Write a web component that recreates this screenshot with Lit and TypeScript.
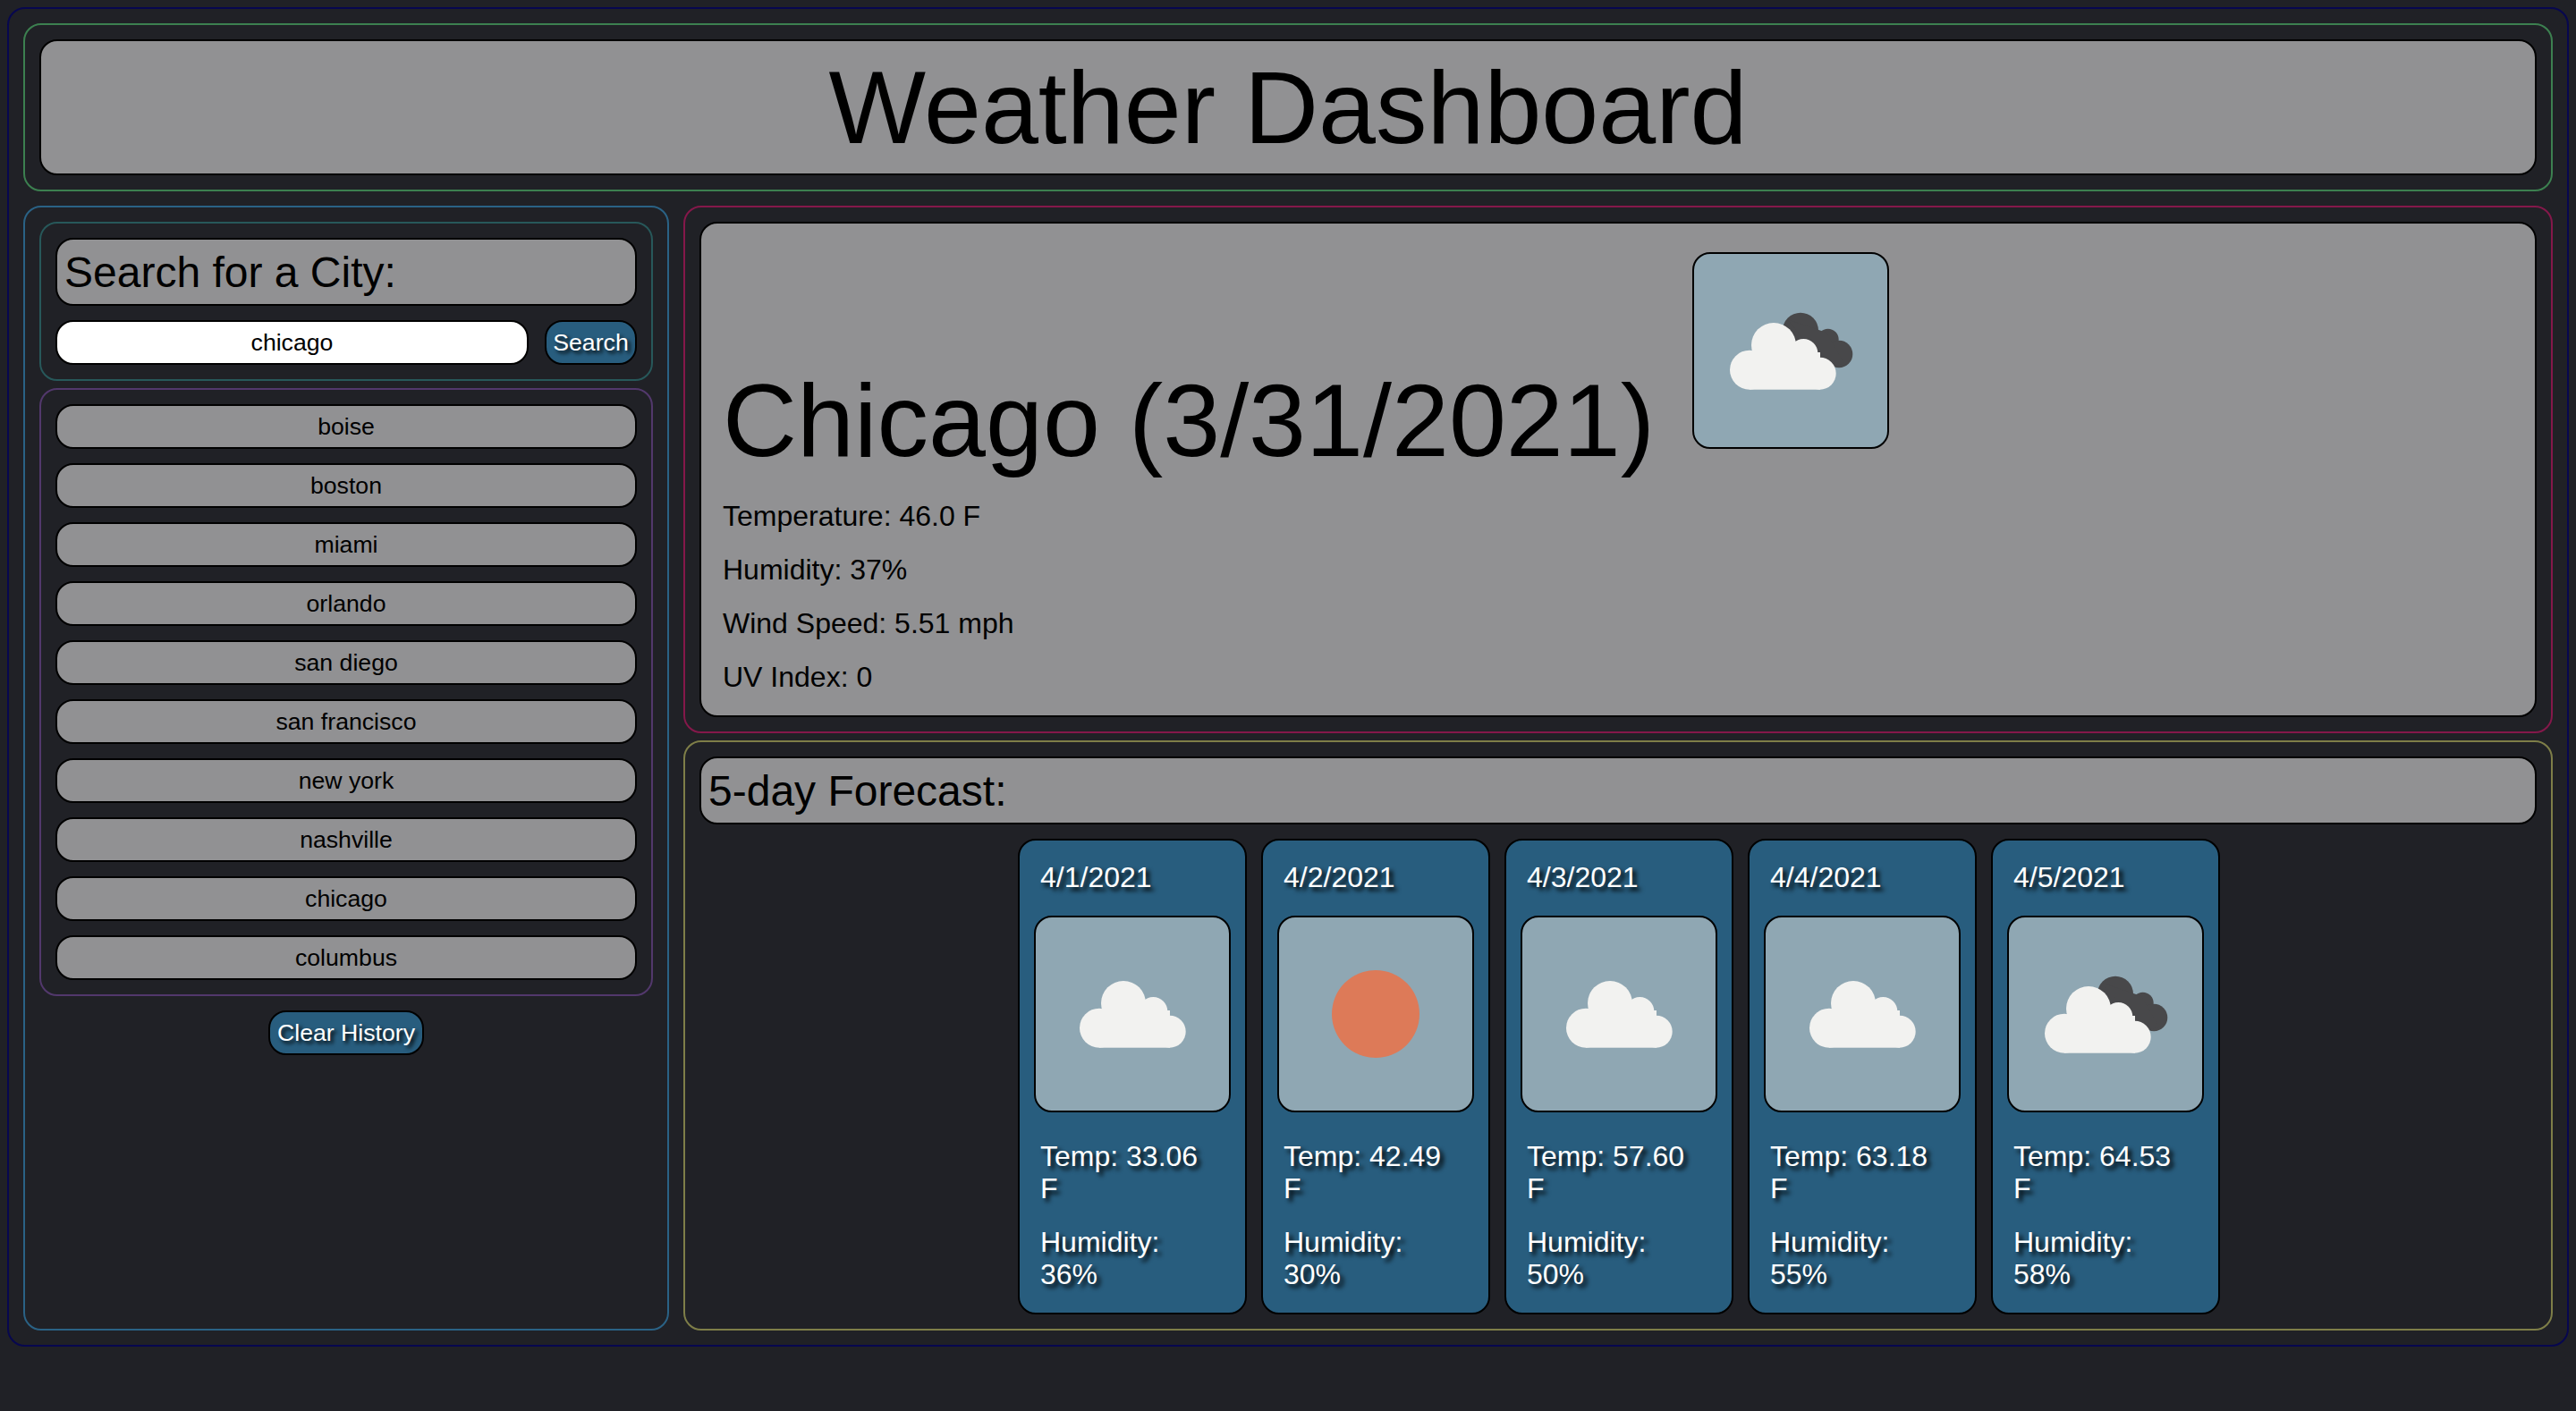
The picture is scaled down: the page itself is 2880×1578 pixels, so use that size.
import { LitElement, html, svg, css } from "lit";
import { customElement, state } from "lit/decorators.js";

type Sky = "clear" | "clouds" | "broken";

const cloud = (fill: string) => svg`
  <g fill=${fill}>
    <circle cx="91" cy="104" r="25" />
    <circle cx="64" cy="131.7" r="22" />
    <circle cx="124.3" cy="113" r="16" />
    <circle cx="142.7" cy="135.7" r="18" />
    <rect x="64" y="112" width="79" height="41.7" />
  </g>
`;

const darkCloud = svg`
  <g fill="#48484a">
    <circle cx="121" cy="87.7" r="20" />
    <circle cx="151.7" cy="97.7" r="12" />
    <circle cx="164" cy="114" r="15.3" />
    <path d="M106 75 L150 90 L170 125 L150 129 Z" />
  </g>
`;

const skyIcon = (sky: Sky) => html`
  <div class="icon">
    <svg viewBox="2 2 216 216" width="216" height="216">
      ${sky === "clear"
        ? svg`<circle cx="110" cy="110" r="49" fill="#dd7a58" />`
        : sky === "clouds"
          ? svg`<g transform="translate(9 -6)">${cloud("#f2f2f0")}</g>`
          : svg`${darkCloud}${cloud("#f2f2f0")}`}
    </svg>
  </div>
`;

@customElement("app-root")
export class AppRoot extends LitElement {
  @state() private _query = "chicago";
  @state() private _history = [
    "boise",
    "boston",
    "miami",
    "orlando",
    "san diego",
    "san francisco",
    "new york",
    "nashville",
    "chicago",
    "columbus",
  ];
  @state() private _forecast: {
    date: string;
    temp: string;
    humidity: number;
    sky: Sky;
  }[] = [
    { date: "4/1/2021", temp: "33.06", humidity: 36, sky: "clouds" },
    { date: "4/2/2021", temp: "42.49", humidity: 30, sky: "clear" },
    { date: "4/3/2021", temp: "57.60", humidity: 50, sky: "clouds" },
    { date: "4/4/2021", temp: "63.18", humidity: 55, sky: "clouds" },
    { date: "4/5/2021", temp: "64.53", humidity: 58, sky: "broken" },
  ];

  static styles = css`
    :host {
      display: block;
      box-sizing: border-box;
      min-height: 100vh;
      padding: 8px;
      background: #202126;
      color: #000;
      font-family: "Liberation Sans", Arial, sans-serif;
      font-size: 32px;
    }
    * {
      box-sizing: border-box;
    }
    .frame {
      border: 2px solid;
      border-radius: 20px;
      padding: 16px;
    }
    .panel {
      background: #919193;
      border: 2px solid #000;
      border-radius: 20px;
    }
    .page {
      border-color: #07074f;
    }
    .header {
      border-color: #3c8050;
      margin-bottom: 16px;
    }
    .header .panel {
      height: 152px;
      display: flex;
      align-items: center;
      justify-content: center;
    }
    h1 {
      margin: 0;
      font-size: 115px;
      font-weight: 400;
    }
    .columns {
      display: flex;
      gap: 16px;
    }
    .sidebar {
      width: 722px;
      flex: none;
      border-color: #2a6285;
      display: flex;
      flex-direction: column;
      align-items: stretch;
    }
    .search {
      border-color: #27585a;
      margin-bottom: 8px;
    }
    .heading {
      height: 76px;
      padding: 0 8px;
      display: flex;
      align-items: center;
      font-size: 48px;
    }
    .search-row {
      display: flex;
      justify-content: space-between;
      margin-top: 16px;
    }
    input {
      width: 529px;
      height: 50px;
      border: 2px solid #000;
      border-radius: 20px;
      background: #fff;
      color: #000;
      text-align: center;
      font: 26.67px "Liberation Sans", Arial, sans-serif;
      outline: none;
    }
    button {
      font: 26.67px "Liberation Sans", Arial, sans-serif;
      padding: 0;
      cursor: pointer;
    }
    .action {
      height: 50px;
      border: 2px solid #000;
      border-radius: 20px;
      background: #285d7e;
      color: #fff;
      text-shadow: 3px 3px 4px #000;
    }
    .search-btn {
      width: 103px;
    }
    .history {
      border-color: #52386c;
      display: flex;
      flex-direction: column;
      gap: 16px;
    }
    .history button {
      height: 50px;
      color: #000;
    }
    .clear {
      width: 174px;
      margin: 16px auto 0;
    }
    .content {
      flex: 1;
      min-width: 0;
      display: flex;
      flex-direction: column;
      gap: 8px;
    }
    .current {
      border-color: #84184a;
    }
    .current .panel {
      height: 554px;
      padding: 32px 24px 0;
    }
    .title-row {
      display: flex;
      align-items: flex-end;
      gap: 42px;
    }
    .title-row h1 {
      line-height: 143px;
    }
    .title-row .icon {
      margin-bottom: 40px;
    }
    .stat {
      margin: 0 0 23px;
      line-height: 37px;
    }
    .title-row + .stat {
      margin-top: 17px;
    }
    .icon {
      width: 220px;
      height: 220px;
      flex: none;
      background: #8fa7b3;
      border: 2px solid #000;
      border-radius: 20px;
    }
    .icon svg {
      display: block;
    }
    .forecast {
      border-color: #7e7e48;
      flex: 1;
    }
    .forecast-cards {
      display: flex;
      justify-content: center;
      gap: 16px;
      margin-top: 16px;
      padding-left: 2px;
    }
    .card {
      width: 256px;
      height: 532px;
      padding: 0 16px;
      background: #285d7e;
      border: 2px solid #000;
      border-radius: 20px;
      color: #fff;
      text-shadow: 4px 4px 5px #000;
    }
    .card p {
      margin: 0 20px 0 7px;
      line-height: 36.5px;
    }
    .card .date {
      margin-top: 23px;
      margin-bottom: 24px;
    }
    .card .temp {
      margin-top: 31px;
    }
    .card .humidity {
      margin-top: 23px;
    }
  `;

  render() {
    return html`
      <div class="frame page">
        <header class="frame header">
          <div class="panel"><h1>Weather Dashboard</h1></div>
        </header>
        <div class="columns">
          <aside class="frame sidebar">
            <section class="frame search">
              <div class="panel heading">Search for a City:</div>
              <div class="search-row">
                <input
                  type="text"
                  .value=${this._query}
                  @input=${(e: any) => (this._query = e.target.value)}
                />
                <button class="action search-btn">Search</button>
              </div>
            </section>
            <section class="frame history">
              ${this._history.map(
                (city) => html`<button class="panel">${city}</button>`,
              )}
            </section>
            <button class="action clear" @click=${() => (this._history = [])}>
              Clear History
            </button>
          </aside>
          <main class="content">
            <section class="frame current">
              <div class="panel">
                <div class="title-row">
                  <h1>Chicago (3/31/2021)</h1>
                  ${skyIcon("broken")}
                </div>
                <p class="stat">Temperature: 46.0 F</p>
                <p class="stat">Humidity: 37%</p>
                <p class="stat">Wind Speed: 5.51 mph</p>
                <p class="stat">UV Index: 0</p>
              </div>
            </section>
            <section class="frame forecast">
              <div class="panel heading">5-day Forecast:</div>
              <div class="forecast-cards">
                ${this._forecast.map(
                  (day) => html`
                    <article class="card">
                      <p class="date">${day.date}</p>
                      ${skyIcon(day.sky)}
                      <p class="temp">Temp: ${day.temp} F</p>
                      <p class="humidity">Humidity: ${day.humidity}%</p>
                    </article>
                  `,
                )}
              </div>
            </section>
          </main>
        </div>
      </div>
    `;
  }
}
